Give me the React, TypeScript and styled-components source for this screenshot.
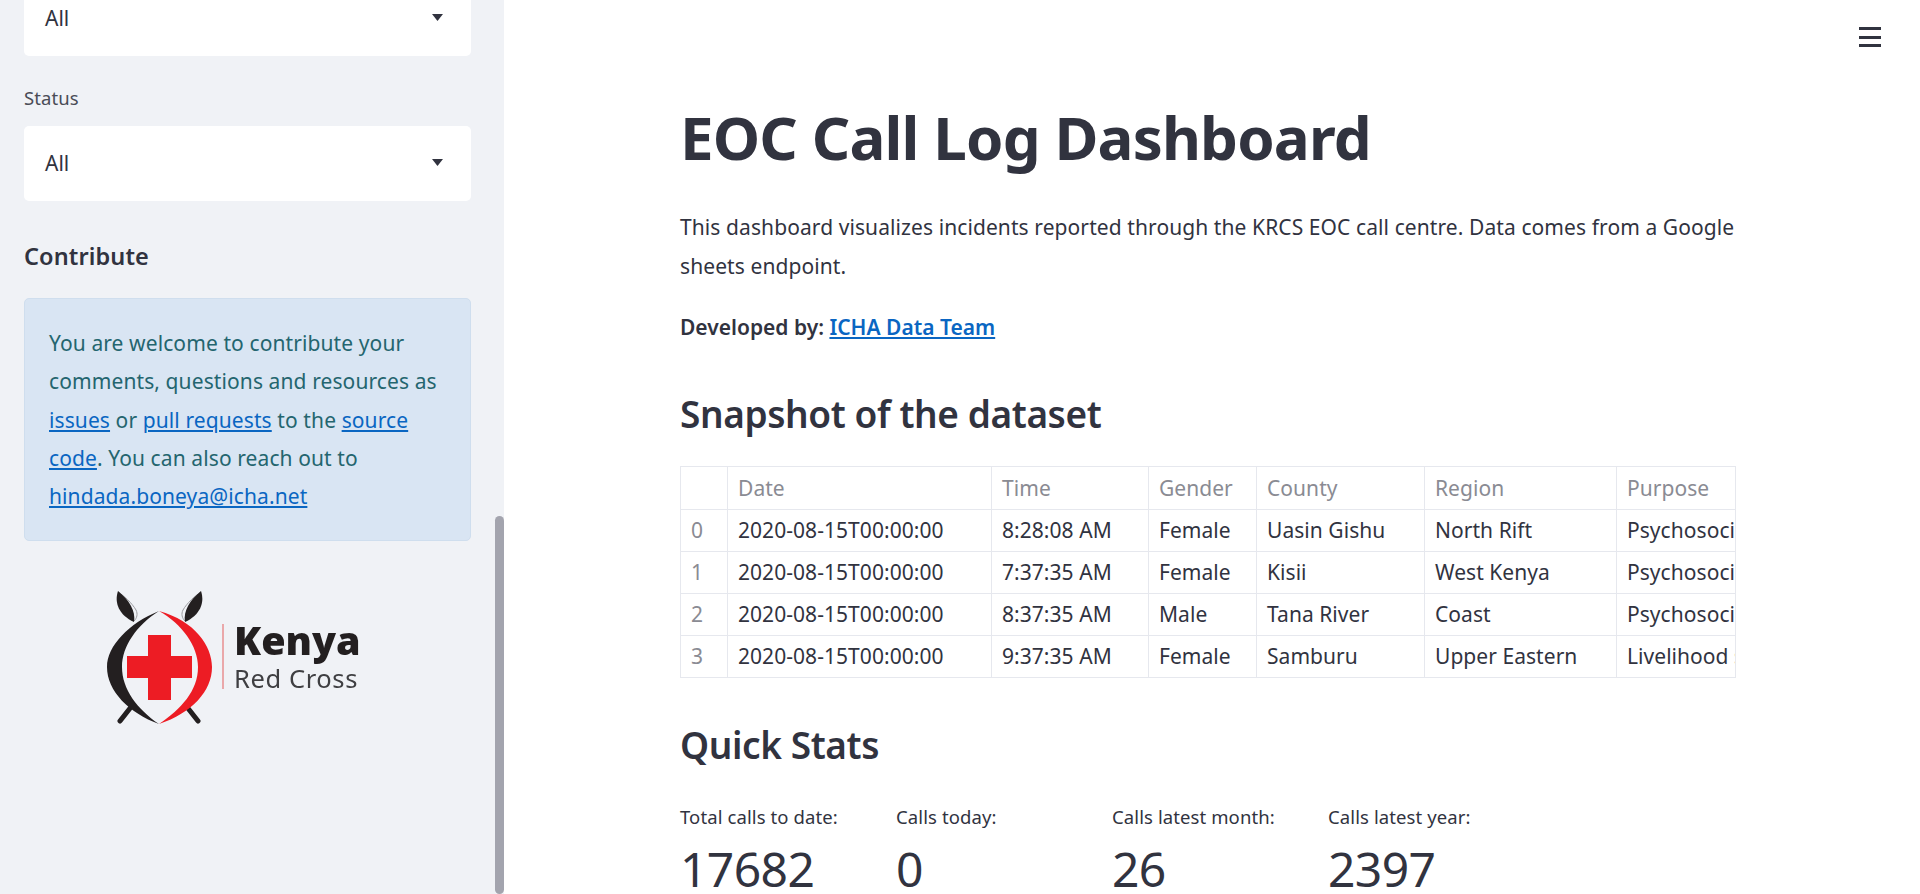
import React from "react";
import styled, { createGlobalStyle } from "styled-components";

const Global = createGlobalStyle`
  html, body { margin: 0; height: 894px; overflow: hidden; background: #fff; }
  body { font-family: "Noto Sans", "Liberation Sans", sans-serif; color: #31333f; }
  #root { height: 894px; }
`;
const Page = styled.div`display: flex; height: 894px; overflow: hidden;`;
const Sidebar = styled.aside`
  position: relative; flex: 0 0 504px; height: 894px; overflow: hidden; background: #f0f2f6;
`;
const SideInner = styled.div`
  display: flex; flex-direction: column; margin-top: -19px; padding: 0 33px 0 24px;
`;
const SelectBox = styled.div`
  display: flex; align-items: center; justify-content: space-between; height: 75px; box-sizing: border-box;
  background: #fff; border-radius: 5px; padding: 0 28px 2px 21px; font-size: 21px; color: #31333f;
  svg { display: block; }
`;
const FieldLabel = styled.div`
  font-size: 18.5px; line-height: 26px; letter-spacing: 0.1px; color: #4a4c57; margin: 29px 0 15px;
`;
const SideHeading = styled.h3`
  margin: 39px 0 26px; font-size: 23.5px; line-height: 32px; font-weight: 600; letter-spacing: 0.1px; color: #31333f;
`;
const InfoBox = styled.div`
  height: 243px; box-sizing: border-box; padding: 25px 20px 0 24px; background: #d9e5f3; border: 1px solid #cfdeee;
  border-radius: 5px; font-size: 21px; line-height: 38.3px; letter-spacing: 0.1px; color: #24656f; white-space: nowrap;
`;
const InfoLink = styled.a`color: #0a66c2; text-decoration: underline;`;
const LogoWrap = styled.div`
  margin: 50px 0 0 83px; width: 262px; filter: blur(0.35px);
  svg { display: block; }
`;
const ScrollThumb = styled.div`
  position: absolute; top: 516px; right: 0; width: 9px; height: 378px; border-radius: 5px; background: #a3a4ae;
`;
const Main = styled.main`flex: 1; min-width: 0; padding: 0 184px 0 176px; position: relative;`;
const Menu = styled.button`
  position: absolute; top: 27px; right: 39px; width: 22px; height: 20px; padding: 0; border: 0; background: none;
  display: flex; flex-direction: column; justify-content: space-between;
  span { display: block; height: 3px; background: #31333f; }
`;
const Title = styled.h1`
  margin: 102px 0 0; font-size: 60px; line-height: 70px; font-weight: 700; letter-spacing: -0.85px; color: #31333f;
`;
const Body = styled.p`
  margin: 36px 0 0; font-size: 21px; line-height: 39px; letter-spacing: 0.09px; color: #31333f;
`;
const DevLine = styled.p`
  margin: 22px 0 0; font-size: 21px; line-height: 39px; font-weight: 600; color: #31333f;
`;
const DevLink = styled.a`color: #0a66c2; text-decoration: underline;`;
const SectionTitle = styled.h2<{ $top: number }>`
  margin: ${p => p.$top}px 0 0; font-size: 37px; line-height: 48px; font-weight: 600; letter-spacing: -0.4px; color: #31333f;
`;
const TableWrap = styled.div`
  margin-top: 28px; width: 1056px; overflow: hidden; border-right: 1px solid #e6e8ee; box-sizing: border-box;
`;
const Table = styled.table`
  border-collapse: collapse; table-layout: fixed; width: 1200px; font-size: 21px; letter-spacing: 0.05px;
`;
const HeadCell = styled.th`
  height: 43px; padding: 0 0 0 10px; text-align: left; font-weight: 400; color: #8a8b93; white-space: nowrap; overflow: hidden;
  border: 1px solid #e6e8ee; box-sizing: border-box;
`;
const IndexCell = styled.td`
  height: 42px; padding: 0 0 2px 10px; color: #8a8b93; border: 1px solid #e6e8ee; box-sizing: border-box;
`;
const Cell = styled.td`
  height: 42px; padding: 0 0 2px 10px; color: #31333f; white-space: nowrap; overflow: hidden;
  border: 1px solid #e6e8ee; box-sizing: border-box;
`;
const StatsRow = styled.div`display: grid; grid-template-columns: repeat(4, 216px); margin-top: 34px;`;
const StatLabel = styled.div`font-size: 18.5px; line-height: 28px; letter-spacing: 0.1px; color: #31333f;`;
const StatValue = styled.div`font-size: 48px; line-height: 60px; margin-top: 8px; letter-spacing: -0.6px; color: #31333f;`;

const widths = [47, 264, 157, 108, 168, 192, 264];
const cols = ["", "Date", "Time", "Gender", "County", "Region", "Purpose"];
const rows = [
  ["0", "2020-08-15T00:00:00", "8:28:08 AM", "Female", "Uasin Gishu", "North Rift", "Psychosocial support"],
  ["1", "2020-08-15T00:00:00", "7:37:35 AM", "Female", "Kisii", "West Kenya", "Psychosocial support"],
  ["2", "2020-08-15T00:00:00", "8:37:35 AM", "Male", "Tana River", "Coast", "Psychosocial support"],
  ["3", "2020-08-15T00:00:00", "9:37:35 AM", "Female", "Samburu", "Upper Eastern", "Livelihood support"],
];
const stats = [
  ["Total calls to date:", "17682"], ["Calls today:", "0"], ["Calls latest month:", "26"], ["Calls latest year:", "2397"],
];

const Caret = () => (
  <svg width="11" height="7" viewBox="0 0 11 7"><path d="M0 0h11L5.5 7z" fill="#31333f" /></svg>
);

const Logo = () => (
  <svg width="262" height="140" viewBox="0 0 262 140">
    <path d="M11 1C17 5 25 12 29 19C31 23 30 27 27 30" fill="none" stroke="#9a9a9e" strokeWidth="1" />
    <path d="M94 1C88 5 80 12 76 19C74 23 75 27 78 30" fill="none" stroke="#9a9a9e" strokeWidth="1" />
    <path d="M11 0C7 12 12 24 27 31C29 20 22 9 11 0Z" fill="#231f20" />
    <path d="M94 0C98 12 93 24 78 31C76 20 83 9 94 0Z" fill="#231f20" />
    <path d="M13 130L24 116" stroke="#231f20" strokeWidth="5" strokeLinecap="round" />
    <path d="M91 130L80 116" stroke="#231f20" strokeWidth="5" strokeLinecap="round" />
    <path d="M52 20C22 32 0 55 0 76C0 100 22 122 52 133C30 118 15 98 15 76C15 55 30 34 52 20Z" fill="#231f20" />
    <path d="M52 20C88 30 105 55 105 76C105 100 85 122 52 133C74 118 91 100 91 76C91 55 75 33 52 20Z" fill="#ed1c24" />
    <path d="M41 44H64V65H85V87H64V109H41V87H20V65H41Z" fill="#ed1c24" />
    <path d="M116 33V98" stroke="#e98f90" strokeWidth="1.5" />
    <text x="127" y="64" fontFamily="'Noto Sans', sans-serif" fontWeight="900" fontSize="39.5" letterSpacing="0" fill="#231f20">Kenya</text>
    <text x="127" y="97" fontFamily="'Noto Sans', sans-serif" fontWeight="400" fontSize="25.5" letterSpacing="0.6" fill="#3f3f42">Red Cross</text>
  </svg>
);

export default function App() {
  return (
    <Page>
      <Global />
      <Sidebar>
        <SideInner>
          <SelectBox>All<Caret /></SelectBox>
          <FieldLabel>Status</FieldLabel>
          <SelectBox>All<Caret /></SelectBox>
          <SideHeading>Contribute</SideHeading>
          <InfoBox>
            You are welcome to contribute your<br />
            comments, questions and resources as<br />
            <InfoLink href="#">issues</InfoLink> or <InfoLink href="#">pull requests</InfoLink> to the <InfoLink href="#">source</InfoLink><br />
            <InfoLink href="#">code</InfoLink>. You can also reach out to<br />
            <InfoLink href="#">hindada.boneya@icha.net</InfoLink>
          </InfoBox>
          <LogoWrap><Logo /></LogoWrap>
        </SideInner>
        <ScrollThumb />
      </Sidebar>
      <Main>
        <Menu aria-label="menu"><span /><span /><span /></Menu>
        <Title>EOC Call Log Dashboard</Title>
        <Body>This dashboard visualizes incidents reported through the KRCS EOC call centre. Data comes from a Google<br />sheets endpoint.</Body>
        <DevLine>Developed by: <DevLink href="#">ICHA Data Team</DevLink></DevLine>
        <SectionTitle $top={43}>Snapshot of the dataset</SectionTitle>
        <TableWrap>
          <Table>
            <colgroup>{widths.map((w, i) => <col key={i} style={{ width: w }} />)}</colgroup>
            <thead><tr>{cols.map(c => <HeadCell key={c}>{c}</HeadCell>)}</tr></thead>
            <tbody>
              {rows.map(r => (
                <tr key={r[0]}>
                  <IndexCell>{r[0]}</IndexCell>
                  {r.slice(1).map((c, i) => <Cell key={i}>{c}</Cell>)}
                </tr>
              ))}
            </tbody>
          </Table>
        </TableWrap>
        <SectionTitle $top={43}>Quick Stats</SectionTitle>
        <StatsRow>
          {stats.map(([l, v]) => (
            <div key={l}><StatLabel>{l}</StatLabel><StatValue>{v}</StatValue></div>
          ))}
        </StatsRow>
      </Main>
    </Page>
  );
}
